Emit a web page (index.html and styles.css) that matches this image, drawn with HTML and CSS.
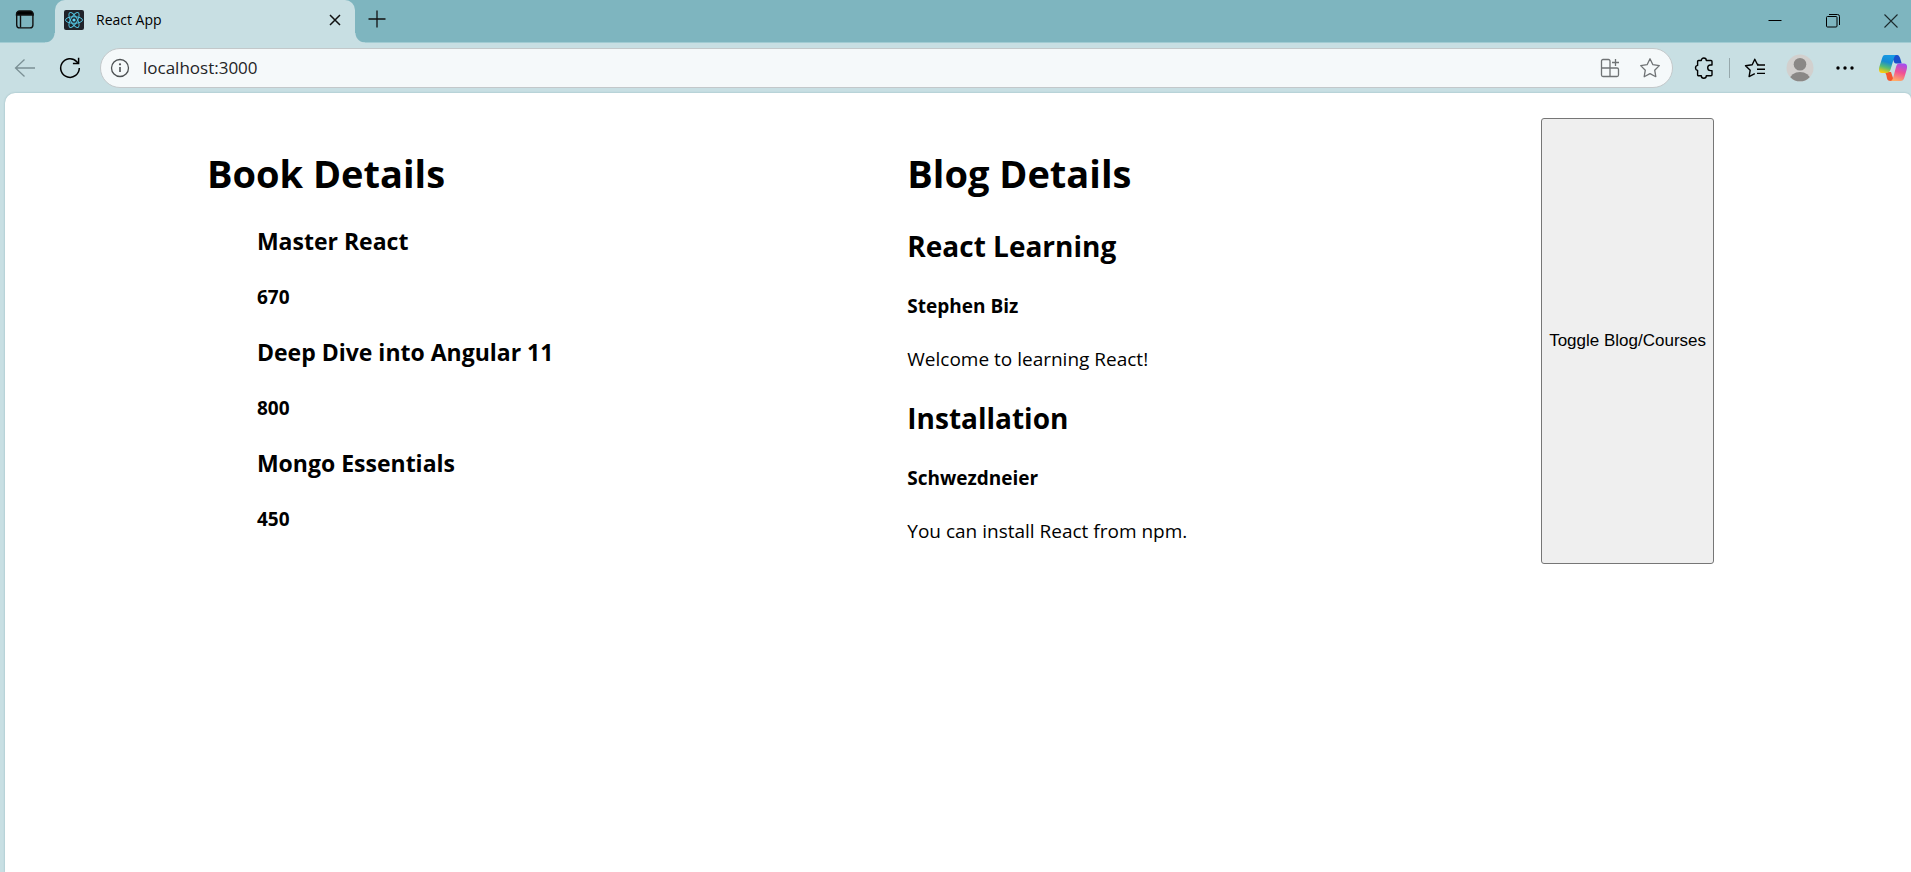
FILE: index.html
```html
<!DOCTYPE html>
<html lang="en">
<head>
<meta charset="utf-8">
<title>React App</title>
<link rel="stylesheet" href="styles.css">
</head>
<body>
<div class="browser">
  <header class="tabstrip">
    <button class="icon-btn workspace" aria-label="Tab actions">
      <svg width="20" height="20" viewBox="0 0 20 20" fill="none" stroke="#111" stroke-width="1.4"><rect x="1.7" y="1.7" width="16.2" height="16.2" rx="3"/><path d="M1.5 5V4a3 3 0 0 1 3-3h10.600a3 3 0 0 1 3 3v1z" fill="#000"/><path d="M5.500 5v12.500"/></svg>
    </button>
    <div class="tab">
      <svg width="20" height="20" viewBox="0 0 20 20" fill="none" stroke="#53c1de" stroke-width="1"><rect width="20" height="20" rx="2" fill="#20232a" stroke="none"/><ellipse cx="10" cy="10" rx="8.500" ry="3.300"/><ellipse cx="10" cy="10" rx="8.500" ry="3.300" transform="rotate(60 10 10)"/><ellipse cx="10" cy="10" rx="8.500" ry="3.300" transform="rotate(120 10 10)"/><circle cx="10" cy="10" r="1.600" fill="#61dafb" stroke="none"/></svg>
      <span class="tab-title">React App</span>
      <button class="icon-btn tab-close" aria-label="Close tab"><svg width="12" height="12" viewBox="0 0 12 12" stroke="#111" stroke-width="1.500"><path d="M1 1l10 10M11 1L1 11"/></svg></button>
    </div>
    <button class="icon-btn new-tab" aria-label="New tab"><svg width="18" height="18" viewBox="0 0 18 18" stroke="#111" stroke-width="1.300"><path d="M9 0.500v17M0.500 9h17"/></svg></button>
    <div class="window-controls">
      <button class="icon-btn" aria-label="Minimize"><svg width="14" height="14" viewBox="0 0 14 14" stroke="#000"><path d="M0.500 6.500h13"/></svg></button>
      <button class="icon-btn" aria-label="Restore"><svg width="14" height="14" viewBox="0 0 14 14" fill="none" stroke="#000"><rect x="0.500" y="2.500" width="10.500" height="10.500" rx="1"/><path d="M3 0.500h8.500a2 2 0 0 1 2 2V11"/></svg></button>
      <button class="icon-btn" aria-label="Close"><svg width="14" height="14" viewBox="0 0 14 14" stroke="#1c2a2d" stroke-width="1.100"><path d="M0.500 0.500l13 13M13.500 0.500l-13 13"/></svg></button>
    </div>
  </header>

  <nav class="toolbar">
    <button class="icon-btn back" aria-label="Back"><svg width="22" height="20" viewBox="0 0 22 20" fill="none" stroke="#7b9095" stroke-width="1.300"><path d="M21 10H1.500M10.500 1.500L1.500 10l9 8.500"/></svg></button>
    <button class="icon-btn reload" aria-label="Refresh"><svg width="22" height="22" viewBox="0 0 22 22" fill="none" stroke="#000" stroke-width="1.500"><path d="M20.300 11A9.300 9.300 0 1 1 17.800 4.700L19.300 6.200M19.600 0.800v5.700h-5.700"/></svg></button>
    <div class="address">
      <button class="icon-btn" aria-label="View site information"><svg width="20" height="20" viewBox="0 0 20 20" fill="none" stroke="#4d5153" stroke-width="1.300"><circle cx="10" cy="10" r="8.500"/><path d="M10 9v5" stroke-width="1.600"/><circle cx="10" cy="6.300" r="1.100" fill="#4d5153" stroke="none"/></svg></button>
      <input class="url" type="text" value="localhost:3000" aria-label="Address">
      <button class="icon-btn" aria-label="App available"><svg width="20" height="20" viewBox="0 0 20 20" fill="none" stroke="#6f7375" stroke-width="1.300"><path d="M10 18.500V3a1.500 1.500 0 0 0-1.500-1.500H3A1.500 1.500 0 0 0 1.500 3v14A1.500 1.500 0 0 0 3 18.500h14a1.500 1.500 0 0 0 1.500-1.500v-5.500a1.500 1.500 0 0 0-1.500-1.500H1.500M15.500 1v7M12 4.500h7"/></svg></button>
      <button class="icon-btn star" aria-label="Add to favorites"><svg width="22" height="22" viewBox="0 0 22 22" fill="none" stroke="#6f7375" stroke-width="1.300" stroke-linejoin="round"><path d="M11 1.800l2.900 5.900 6.400.9-4.600 4.600 1.100 6.500-5.800-3.100-5.800 3.100 1.100-6.500L1.700 8.600l6.400-.9z"/></svg></button>
    </div>
    <button class="icon-btn extensions" aria-label="Extensions"><svg width="20" height="22" viewBox="0 0 20 22" fill="none" stroke="#000" stroke-width="1.400" stroke-linejoin="round"><path d="M7.300 3.500a2.500 2.500 0 0 1 5 0h4.700a1 1 0 0 1 1 1V8h-1.500a2.700 2.700 0 0 0 0 5.600h1.500v4.100a1 1 0 0 1-1 1h-4.700a2.500 2.500 0 0 1-5 0H4.600a1 1 0 0 1-1-1v-4.200a2.600 2.600 0 0 1 0-5.100V4.500a1 1 0 0 1 1-1z"/></svg></button>
    <span class="divider"></span>
    <button class="icon-btn favorites" aria-label="Favorites"><svg width="22" height="22" viewBox="0 0 22 22" fill="none" stroke="#000" stroke-width="1.400" stroke-linejoin="round"><path d="M14.500 7.500l-1.200-.2L10.800 2.200 8.200 7.700l-6.700 1 4.700 4.500-1.100 6.400 5.700-2.900M13 8h8M13 12.200h8M13 16.400h8"/></svg></button>
    <button class="icon-btn profile" aria-label="Profile"><svg width="28" height="28" viewBox="0 0 28 28"><defs><clipPath id="face"><circle cx="14" cy="14" r="13.300"/></clipPath></defs><circle cx="14" cy="14" r="13.500" fill="#d2d0ce"/><g fill="#8a8886" clip-path="url(#face)"><circle cx="14" cy="10.300" r="6.300"/><ellipse cx="14" cy="25.500" rx="10.200" ry="7.500"/></g></svg></button>
    <button class="icon-btn more" aria-label="Settings and more"><svg width="18" height="6" viewBox="0 0 18 6"><circle cx="2" cy="3" r="1.700"/><circle cx="9" cy="3" r="1.700"/><circle cx="16" cy="3" r="1.700"/></svg></button>
    <button class="icon-btn copilot" aria-label="Copilot"><svg width="28" height="26" viewBox="0 0 28 26"><defs><linearGradient id="cool" x1="0.600" y1="0" x2="0.300" y2="1"><stop offset="0" stop-color="#169be5"/><stop offset=".4" stop-color="#168bd3"/><stop offset=".7" stop-color="#58bd72"/><stop offset="1" stop-color="#ffcc0b"/></linearGradient><linearGradient id="warm" x1="0.700" y1="0" x2="0.400" y2="1"><stop offset="0" stop-color="#a44cf0"/><stop offset=".5" stop-color="#f15193"/><stop offset="1" stop-color="#ffad67"/></linearGradient></defs><path d="M12 0h6c2 0 3 2 3.700 5l1 3.500H17c-1.500 0-2-1-2.500-3z" fill="#1b4fcc"/><path d="M6 17h6l2 6 1 3h-3.500C8 26 8 23 7.300 20z" fill="#f4572c"/><path d="M6 0h12c-2 0-2.800 2-3.500 4.500L11.700 14c-.7 2.500-2 4-4.500 4H3c-3 0-3.500-2.500-2.700-6L3 3.500C3.700 1 4.500 0 6 0z" fill="url(#cool)"/><path d="M20.500 8.500H25c3 0 3.500 2.500 2.700 6L25.500 22c-.8 3-2 4-4 4H11c2 0 2.800-2 3.500-4.500L17 12c.7-2.500 1.500-3.500 3.500-3.500z" fill="url(#warm)"/></svg></button>
  </nav>

  <main class="page">
    <div class="content">
      <section class="books">
        <h1>Book Details</h1>
        <ul>
          <li><h3>Master React</h3><h4>670</h4></li>
          <li><h3>Deep Dive into Angular 11</h3><h4>800</h4></li>
          <li><h3>Mongo Essentials</h3><h4>450</h4></li>
        </ul>
      </section>
      <section class="blogs">
        <h1>Blog Details</h1>
        <article><h2>React Learning</h2><h4>Stephen Biz</h4><p>Welcome to learning React!</p></article>
        <article><h2>Installation</h2><h4>Schwezdneier</h4><p>You can install React from npm.</p></article>
      </section>
      <button class="toggle">Toggle Blog/Courses</button>
    </div>
  </main>
</div>
</body>
</html>
```
FILE: styles.css
```css
* { box-sizing: border-box; }
body { margin: 0; font-family: "Segoe UI", "Open Sans", "Noto Sans", sans-serif; color: #000; }
.browser { min-height: 100vh; display: flex; flex-direction: column; background: #c8dfe3; }
.icon-btn { display: flex; align-items: center; justify-content: center; flex: none; padding: 0; border: 0; background: none; }
svg { display: block; flex: none; }

.tabstrip { display: flex; height: 43px; background: #7eb5bf; border-bottom: 1px solid #a2ccd3; }
.workspace { width: 50px; height: 40px; }
.tab { position: relative; display: flex; align-items: center; gap: 12px; width: 300px; height: 43px; margin-left: 5px; padding: 0 14px 3px 9px; background: #c8dfe3; border-radius: 10px 10px 0 0; }
.tab::before, .tab::after { content: ""; position: absolute; bottom: 0; width: 10px; height: 10px; }
.tab::before { right: 100%; background: radial-gradient(circle at 0 0, transparent 9px, #c8dfe3 10px); }
.tab::after { left: 100%; background: radial-gradient(circle at 100% 0, transparent 9px, #c8dfe3 10px); }
.tab-title { flex: 1; font-size: 14px; line-height: 20px; }
.new-tab { width: 44px; height: 38px; }
.window-controls { display: flex; margin-left: auto; }
.window-controls .icon-btn { width: 58px; height: 42px; }
.window-controls .icon-btn:last-child { width: 40px; margin-left: 9px; }

.toolbar { display: flex; align-items: center; height: 50px; padding: 0 4px 0 14px; }
.back { width: 22px; }
.reload { width: 22px; margin-left: 23px; }
.address { display: flex; align-items: center; flex: 1; height: 40px; margin-left: 19px; padding: 0 11px 0 9px; border: 1px solid #c3c8ca; border-radius: 20px; background: #f5f9fa; }
.url { flex: 1; min-width: 0; height: 30px; margin-left: 13px; padding: 0; border: 0; outline: 0; background: none; color: #1f2426; font: 17px/30px "Segoe UI", "Open Sans", "Noto Sans", sans-serif; }
.star { margin-left: 19px; }
.extensions { margin-left: 21px; }
.divider { width: 1px; height: 20px; margin-left: 15px; background: #96a8ac; }
.favorites { margin-left: 14px; }
.profile { margin-left: 20px; }
.more { margin-left: 22px; }
.copilot { margin-left: 25px; }

.page { flex: 1; margin-left: 5px; padding: 25px 20px 0 25px; background: #fff; border-radius: 10px 6px 0 0; box-shadow: 0 0 2px #8fb3b9; }
.content { display: flex; justify-content: space-around; }
h1, h2, h3, h4, p, ul { margin: 0; }
h1 { margin-top: 29px; font-size: 38px; line-height: 52px; }
h2 { margin-top: 27px; font-size: 28px; line-height: 40px; }
h3 { margin-top: 27px; font-size: 23px; line-height: 31px; }
h4 { margin-top: 27px; font-size: 19px; line-height: 26px; }
p { margin-top: 27px; font-size: 19px; line-height: 27px; }
article + article h2 { margin-top: 25px; }
.blogs { padding-bottom: 19px; }
ul { padding-left: 50px; list-style: none; }
.toggle { padding: 0 7px; border: 1px solid #767676; border-radius: 3px; background: #efefef; color: #000; font: 17px "Liberation Sans", Arial, sans-serif; }
```
